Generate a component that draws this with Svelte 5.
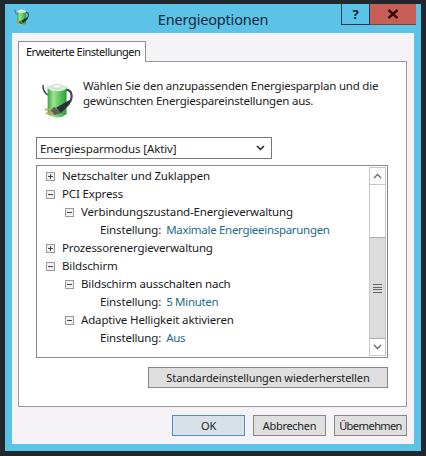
<script lang="ts">
	const rows = [
		{ depth: 0, icon: 'plus', text: 'Netzschalter und Zuklappen' },
		{ depth: 0, icon: 'minus', text: 'PCI Express' },
		{ depth: 1, icon: 'minus', text: 'Verbindungszustand-Energieverwaltung' },
		{ depth: 2, text: 'Einstellung:', value: 'Maximale Energieeinsparungen' },
		{ depth: 0, icon: 'plus', text: 'Prozessorenergieverwaltung' },
		{ depth: 0, icon: 'minus', text: 'Bildschirm' },
		{ depth: 1, icon: 'minus', text: 'Bildschirm ausschalten nach' },
		{ depth: 2, text: 'Einstellung:', value: '5 Minuten' },
		{ depth: 1, icon: 'minus', text: 'Adaptive Helligkeit aktivieren' },
		{ depth: 2, text: 'Einstellung:', value: 'Aus' }
	];
</script>

{#snippet battery(size: number)}
	<svg width={size} height={size} viewBox="0 0 36 38">
		<defs>
			<linearGradient id="cell" x1="0" x2="1" y1="0" y2="0">
				<stop offset="0" stop-color="#3fa548" />
				<stop offset="0.3" stop-color="#9be58a" />
				<stop offset="0.7" stop-color="#55bf5c" />
				<stop offset="1" stop-color="#2f9a3c" />
			</linearGradient>
		</defs>
		<path d="M1 2 C1 8 3 11 7 13" fill="none" stroke="#3d4a52" stroke-width="1.6" />
		<path d="M25 7 C33 7 33 18 27 22" fill="none" stroke="#3d4a52" stroke-width="2.4" />
		<path d="M6 4 Q16 0 26 4 V33 Q16 40 6 33 Z" fill="url(#cell)" />
		<ellipse cx="16" cy="5" rx="10" ry="3.6" fill="#d6efd2" />
		<ellipse cx="16" cy="3.5" rx="4.5" ry="2.2" fill="#f6f9f5" stroke="#9fb9a0" stroke-width="0.5" />
		<path d="M15 26 L29 18 Q31 20 29 23 L20 32 Z" fill="#2a3034" />
		<path d="M13 25 L20 32 L13 34 L9 29 Z" fill="#5c5f60" />
		<path d="M10 28 L3 28 M12 32 L4 32" stroke="#c9a05a" stroke-width="1.8" />
	</svg>
{/snippet}

<div class="window">
	<header class="titlebar">
		<span class="appicon">{@render battery(17)}</span>
		<h1>Energieoptionen</h1>
		<div class="controls">
			<button class="help">?</button>
			<button class="close">
				<svg width="12" height="10" viewBox="0 0 12 10">
					<path d="M1.5 1 L10.5 9 M10.5 1 L1.5 9" stroke="#3a0a08" stroke-width="2.4" />
				</svg>
			</button>
		</div>
	</header>

	<div class="client">
		<div class="tabs">
			<div class="tab">Erweiterte Einstellungen</div>
		</div>
		<section class="panel">
			<div class="intro">
				<span class="introicon">{@render battery(36)}</span>
				<p>
					Wählen Sie den anzupassenden Energiesparplan und die<br />
					gewünschten Energiespareinstellungen aus.
				</p>
			</div>

			<div class="select">
				<span>Energiesparmodus [Aktiv]</span>
				<svg width="9" height="6" viewBox="0 0 9 6">
					<path d="M1 1 L4.5 4.5 L8 1" fill="none" stroke="#222" stroke-width="1.5" />
				</svg>
			</div>

			<div class="list">
				<ul>
					{#each rows as row}
						<li class="d{row.depth}">
							{#if row.icon}
								<span class="box">
									<i class="h"></i>
									{#if row.icon === 'plus'}<i class="v"></i>{/if}
								</span>
							{/if}
							<span>{row.text}</span>
							{#if row.value}<span class="value">{row.value}</span>{/if}
						</li>
					{/each}
				</ul>
				<div class="scrollbar">
					<div class="arrow">
						<svg width="9" height="6" viewBox="0 0 9 6"><path d="M1 5 L4.5 1.5 L8 5" fill="none" stroke="#666" stroke-width="1.3" /></svg>
					</div>
					<div class="track"></div>
					<div class="thumb">
						<span class="grip"></span>
					</div>
					<div class="arrow">
						<svg width="9" height="6" viewBox="0 0 9 6"><path d="M1 1 L4.5 4.5 L8 1" fill="none" stroke="#666" stroke-width="1.3" /></svg>
					</div>
				</div>
			</div>

			<div class="restore">
				<button>Standardeinstellungen wiederherstellen</button>
			</div>
		</section>

		<footer>
			<button class="primary">OK</button>
			<button>Abbrechen</button>
			<button class="apply">Übernehmen</button>
		</footer>
	</div>
</div>

<style>
	:global(body) {
		margin: 0;
		background: #20282c;
	}
	.window {
		box-sizing: border-box;
		width: 426px;
		height: 456px;
		border: solid #20282c;
		border-width: 4px 5px 5px 5px;
		background: #5cc3e8;
		padding: 0 7px 7px 7px;
		display: flex;
		flex-direction: column;
		font-family: 'Noto Sans', sans-serif;
		font-size: 11.5px;
		color: #1a1a1a;
	}
	.titlebar {
		height: 29px;
		flex: none;
		display: flex;
		align-items: flex-start;
		position: relative;
	}
	.appicon {
		margin: 5px 0 0 2px;
		height: 17px;
	}
	h1 {
		position: absolute;
		left: 0;
		right: 0;
		top: 3px;
		margin: 0;
		text-align: center;
		font-weight: 400;
		font-size: 14.5px;
		letter-spacing: -0.2px;
		line-height: 24px;
		color: #14283a;
	}
	.controls {
		position: absolute;
		right: -2px;
		top: 0;
		display: flex;
	}
	.controls button {
		height: 21px;
		padding: 0;
		border: 0;
		display: flex;
		align-items: center;
		justify-content: center;
	}
	.help {
		width: 29px;
		background: #5cc3e8;
		border: 1px solid #1f3a4a !important;
		border-top: 0 !important;
		font: 700 13px 'Noto Sans', sans-serif;
		color: #102030;
	}
	.close {
		width: 46px;
		background: #c75f58;
		border-bottom: 1px solid #7a3a36 !important;
	}
	.client {
		flex: 1;
		background: #f5f3f7;
		padding: 8px 7px 8px 6px;
		display: flex;
		flex-direction: column;
		min-height: 0;
	}
	.tabs {
		display: flex;
		height: 20px;
		flex: none;
		position: relative;
		z-index: 1;
	}
	.tab {
		box-sizing: border-box;
		width: 128px;
		height: 21px;
		background: #fff;
		border: 1px solid #8f8f8f;
		border-bottom: 0;
		padding-left: 7px;
		line-height: 20px;
		font-size: 11px;
		letter-spacing: -0.5px;
		white-space: nowrap;
		color: #111;
	}
	.panel {
		box-sizing: border-box;
		height: 346px;
		flex: none;
		background: #fff;
		border: 1px solid #9a9a9a;
		padding: 0 18px 0 17px;
		display: flex;
		flex-direction: column;
	}
	.intro {
		display: flex;
		height: 75px;
		flex: none;
	}
	.introicon {
		margin: 21px 0 0 5px;
		width: 42px;
		flex: none;
	}
	p {
		margin: 16px 0 0 0;
		line-height: 15px;
		white-space: nowrap;
		letter-spacing: -0.21px;
		color: #222;
	}
	.select {
		box-sizing: border-box;
		width: 236px;
		height: 22px;
		flex: none;
		border: 1px solid #7a7a7a;
		padding: 0 6px 0 3px;
		display: flex;
		align-items: center;
		justify-content: space-between;
		letter-spacing: -0.12px;
	}
	.list {
		box-sizing: border-box;
		margin-top: 6px;
		height: 193px;
		flex: none;
		border: 1px solid #8a8a8a;
		display: flex;
		justify-content: space-between;
		padding: 1px;
	}
	ul {
		list-style: none;
		margin: 0;
		padding: 0 0 0 6px;
	}
	li {
		height: 18px;
		line-height: 18px;
		display: flex;
		align-items: center;
		white-space: nowrap;
		letter-spacing: -0.15px;
	}
	li.d1 {
		padding-left: 19px;
	}
	li.d2 {
		padding-left: 56px;
		gap: 5px;
	}
	.box {
		box-sizing: border-box;
		width: 9px;
		height: 9px;
		border: 1px solid #9a9a9a;
		background: #f1f1f1;
		position: relative;
		margin: 0 7px 0 2px;
		flex: none;
	}
	.box i {
		position: absolute;
		background: #444;
	}
	.box .h {
		left: 1px;
		top: 3px;
		width: 5px;
		height: 1px;
	}
	.box .v {
		left: 3px;
		top: 1px;
		width: 1px;
		height: 5px;
	}
	.value {
		color: #1b6b8c;
		letter-spacing: -0.3px;
	}
	.scrollbar {
		box-sizing: border-box;
		width: 17px;
		border: 1px solid #c8c8c8;
		display: flex;
		flex-direction: column;
	}
	.arrow {
		height: 16px;
		flex: none;
		display: flex;
		align-items: center;
		justify-content: center;
		background: #fff;
	}
	.scrollbar .arrow:first-child {
		border-bottom: 1px solid #c8c8c8;
	}
	.track {
		height: 52px;
		flex: none;
		background: #fff;
	}
	.thumb {
		flex: 1;
		background: #dcdcdc;
		border-top: 1px solid #aaa;
		border-bottom: 1px solid #aaa;
		display: flex;
		align-items: center;
		justify-content: center;
	}
	.grip {
		width: 9px;
		height: 7px;
		border-top: 1px solid #666;
		border-bottom: 1px solid #666;
		background: linear-gradient(#dcdcdc 2px, #666 2px, #666 3px, #dcdcdc 3px, #dcdcdc 4px, #666 4px, #666 5px, #dcdcdc 5px);
	}
	.restore {
		margin-top: 9px;
		display: flex;
		justify-content: flex-end;
	}
	button {
		font-family: 'Noto Sans', sans-serif;
		font-size: 11px;
		letter-spacing: -0.1px;
		color: #222;
		background: #dfdfdf;
		border: 1px solid #888;
		height: 21px;
		padding: 0;
	}
	.restore button {
		width: 240px;
	}
	footer {
		display: flex;
		justify-content: flex-end;
		gap: 8px;
		margin-top: 8px;
	}
	footer button {
		width: 73px;
		letter-spacing: -0.3px;
	}
	footer .apply {
		letter-spacing: -0.6px;
	}
	.primary {
		background: #d9e1e8;
		border-color: #4f8fbf;
	}
</style>
